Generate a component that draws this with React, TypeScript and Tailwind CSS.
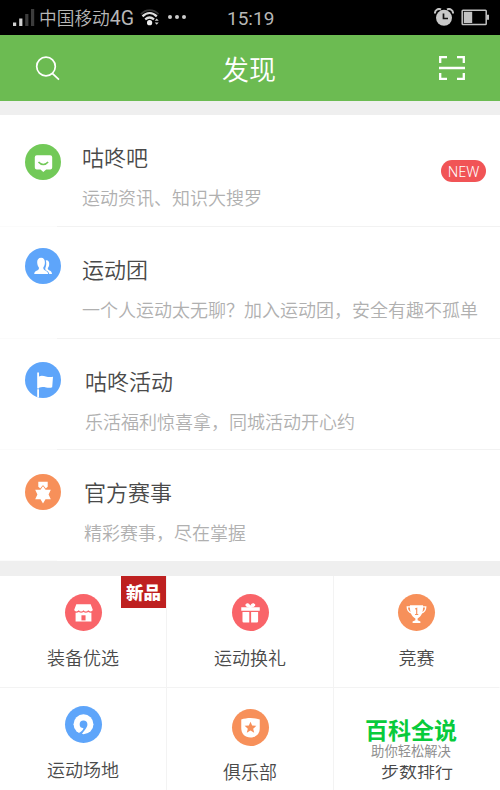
import { ReactNode } from "react";

type MenuRowType = {
  title: string;
  description: string;
  icon: ReactNode;
  rowClass: string;
  iconClass: string;
  textClass: string;
  isNew?: boolean;
};

type GridItemType = {
  name: string;
  icon: ReactNode;
  iconClass: string;
  labelClass: string;
  isNew?: boolean;
};

const menuRows: MenuRowType[] = [
  {
    title: "咕咚吧",
    description: "运动资讯、知识大搜罗",
    icon: <ChatIcon />,
    rowClass: "h-[112px]",
    iconClass: "mt-[29px] bg-[#72c958]",
    textClass: "pl-[25px] pt-[25px] border-[#f2f2f2]",
    isNew: true,
  },
  {
    title: "运动团",
    description: "一个人运动太无聊？加入运动团，安全有趣不孤单",
    icon: <GroupIcon />,
    rowClass: "h-[112px]",
    iconClass: "mt-[21px] bg-[#5ea5fa]",
    textClass: "pl-[25px] pt-[25px] border-[#f2f2f2]",
  },
  {
    title: "咕咚活动",
    description: "乐活福利惊喜拿，同城活动开心约",
    icon: <FlagIcon />,
    rowClass: "h-[111px]",
    iconClass: "mt-[23px] bg-[#5ea5fa]",
    textClass: "pl-[28px] pt-[25px] border-[#f2f2f2]",
  },
  {
    title: "官方赛事",
    description: "精彩赛事，尽在掌握",
    icon: <MedalIcon />,
    rowClass: "h-[111px]",
    iconClass: "mt-[24px] bg-[#f7905a]",
    textClass: "pl-[27px] pt-[25px] border-transparent",
  },
];

const gridItems: GridItemType[] = [
  {
    name: "装备优选",
    icon: <ShopIcon />,
    iconClass: "mt-[18px] bg-[#f96469]",
    labelClass: "mt-[14px]",
    isNew: true,
  },
  {
    name: "运动换礼",
    icon: <GiftIcon />,
    iconClass: "mt-[18px] bg-[#f96469]",
    labelClass: "mt-[14px]",
  },
  {
    name: "竞赛",
    icon: <TrophyIcon />,
    iconClass: "mt-[18px] bg-[#f7905a]",
    labelClass: "mt-[14px]",
  },
  {
    name: "运动场地",
    icon: <PlaceIcon />,
    iconClass: "mt-[18px] bg-[#5ea5fa]",
    labelClass: "mt-[14px]",
  },
  {
    name: "俱乐部",
    icon: <ClubIcon />,
    iconClass: "mt-[21px] bg-[#f7905a]",
    labelClass: "mt-[13px]",
  },
];

export default function App() {
  return (
    <div className="w-[500px] h-[790px] flex flex-col overflow-hidden bg-white font-['Noto_Sans_CJK_SC',sans-serif] font-[350]">
      <StatusBar />

      <header className="h-[66px] shrink-0 flex items-center justify-between bg-[#6cbb52] pl-[35px] pr-[34px] text-white">
        <svg className="w-[25px] h-[25px]" viewBox="0 0 25 25" fill="none" stroke="currentColor" strokeWidth="1.7">
          <circle cx="11" cy="10.5" r="9.3" />
          <path d="M17.3 17.3 24 23.7" />
        </svg>
        <h1 className="text-[27px] leading-[40px] font-[350] pt-px">发现</h1>
        <svg className="w-[28px] h-[26px]" viewBox="0 0 28 26" fill="none" stroke="currentColor" strokeWidth="2.3">
          <path d="M2.2 8V2.1H9M19 2.1h6.8V8M25.8 18v5.9H19M9 23.9H2.2V18M1 13h26" />
        </svg>
      </header>

      <div className="h-[14px] shrink-0 bg-[#efefef]" />

      <ul className="shrink-0">
        {menuRows.map((row) => (
          <MenuRow key={row.title} row={row} />
        ))}
      </ul>

      <div className="h-[15px] shrink-0 bg-[#efefef]" />

      <div className="grid grid-cols-[167px_167px_166px] grid-rows-[112px_112px] shrink-0">
        {gridItems.map((item) => (
          <GridItem key={item.name} item={item} />
        ))}

        <div className="flex flex-col items-center relative">
          <p className="mt-[73px] text-[18px] leading-[18px] text-[#484848]">步数排行</p>
          <div className="absolute left-[24px] top-[20px] w-[120px] h-[57px] bg-white flex flex-col items-center pr-[14px]">
            <strong className="text-[23px] leading-[24px] mt-[9px] font-bold text-[#08cb3b] whitespace-nowrap">百科全说</strong>
            <span className="mt-[3px] text-[13.3px] leading-[14px] font-normal text-[#8e8e8e] whitespace-nowrap">助你轻松解决</span>
          </div>
        </div>
      </div>
    </div>
  );
}

function StatusBar() {
  return (
    <div className="h-[35px] shrink-0 flex items-center bg-black text-[#b7b7b7] relative">
      <svg className="w-[22px] h-[18px] ml-[13px]" viewBox="0 0 22 18">
        <path d="M0 13.5h3.2V17H0zM6.2 9.5h3.2V17H6.2z" fill="#d0d0d0" />
        <path d="M12.2 5h3.2v12h-3.2zM18 0h3.2v17H18z" fill="#3c3c3c" />
      </svg>
      <span className="ml-[4px] text-[17.7px] leading-[24px] whitespace-nowrap">
        中国移动<span className="font-['Roboto',sans-serif] font-normal text-[19.5px]">4G</span>
      </span>
      <svg className="absolute left-[140px] top-[8px] w-[20px] h-[18px]" viewBox="0 0 20 18" fill="none">
        <path d="M1 6.2C5.8.8 13.5.8 18.5 6.2" stroke="#333" strokeWidth="1.8" />
        <path d="M2.5 8.4C6.8 4.1 12.4 4.1 16.8 8.4M5.2 11.4c2.8-2.4 6-2.4 8.8 0" stroke="#dedede" strokeWidth="2.2" />
        <circle cx="9.6" cy="14.7" r="2.6" fill="#eee" />
        <path d="m14.7 12.8 2-2.2 2 2.2zM14.7 14.5l2 2.2 2-2.2z" fill="#ccc" />
      </svg>
      <div className="absolute left-[168px] top-[15px] flex gap-[3px]">
        <i className="w-[4px] h-[4px] rounded-full bg-[#ccc]" />
        <i className="w-[4px] h-[4px] rounded-full bg-[#ccc]" />
        <i className="w-[4px] h-[4px] rounded-full bg-[#ccc]" />
      </div>
      <span className="absolute left-[227px] top-[7px] font-['Roboto',sans-serif] font-normal text-[19px] leading-[24px]">15:19</span>
      <svg className="absolute left-[434px] top-[8px] w-[20px] h-[19px]" viewBox="0 0 20 19">
        <path d="M1 5.5A4.1 4.1 0 0 1 7 1.5M13 1.5a4.1 4.1 0 0 1 6 4" fill="none" stroke="#c5c5c5" strokeWidth="2" />
        <circle cx="10" cy="9.8" r="8" fill="#c9c9c9" />
        <path d="M9.5 5.5v5h4.5" fill="none" stroke="#111" strokeWidth="1.7" />
      </svg>
      <svg className="absolute left-[461px] top-[9px] w-[29px] h-[17px]" viewBox="0 0 29 17">
        <rect x="1.2" y="1.2" width="24" height="14.4" rx=".8" fill="none" stroke="#c2c2c2" strokeWidth="1.5" />
        <path d="M2.8 2.8h8.4v11.2H2.8zM26 5.8h2v5h-2z" fill="#c2c2c2" />
      </svg>
    </div>
  );
}

function MenuRow({ row }: { row: MenuRowType }) {
  return (
    <li className={`flex relative ${row.rowClass}`}>
      <div className="w-[57px] shrink-0 flex justify-end items-start border-b border-[#fbfbfb]">
        <div className={`-mr-[4px] w-[36px] h-[36px] rounded-full shrink-0 ${row.iconClass}`}>{row.icon}</div>
      </div>
      <div className={`flex-1 border-b whitespace-nowrap ${row.textClass}`}>
        <h2 className="text-[22px] leading-[32px] text-[#4a4a4a]">{row.title}</h2>
        <p className="mt-[13px] text-[18px] leading-[24px] text-[#b0b0b0]">{row.description}</p>
      </div>
      {row.isNew && (
        <span className="absolute left-[441px] top-[45px] w-[45px] h-[22px] rounded-full bg-[#f15456] text-center text-white font-['Noto_Sans',sans-serif] font-light text-[14.5px] leading-[22px]">
          NEW
        </span>
      )}
    </li>
  );
}

function GridItem({ item }: { item: GridItemType }) {
  return (
    <div className="flex flex-col items-center relative border-r border-b border-[#f3f3f3] nth-[3]:border-r-transparent">
      <div className={`w-[37px] h-[37px] rounded-full shrink-0 ${item.iconClass}`}>{item.icon}</div>
      <p className={`text-[18px] leading-[24px] text-[#4a4a4a] ${item.labelClass}`}>{item.name}</p>
      {item.isNew && (
        <span className="absolute right-0 top-0 w-[45px] h-[32px] bg-[#be2020] text-center text-white font-black text-[17.5px] leading-[32px]">
          新品
        </span>
      )}
    </div>
  );
}

function ChatIcon() {
  return (
    <svg viewBox="0 0 36 36" fill="#fff">
      <path d="M11.8 11.2h13.4a2 2 0 0 1 2 2v10.4a2 2 0 0 1-2 2h-4L18.3 28l-2.8-2.4h-3.7a2 2 0 0 1-2-2V13.200a2 2 0 0 1 2-2z" />
      <path d="M13.500 18c2.600 3.200 7 3.200 9.600 0" fill="none" stroke="#72c958" strokeWidth="1.500" />
    </svg>
  );
}

function GroupIcon() {
  return (
    <svg viewBox="0 0 36 36" fill="#fff">
      <path d="M16.100 9.800c2.700 0 4 2 3.800 5-.1 2.300-.8 3.700-1.600 4.700-.2 1.800.6 2.200 2 2.900 1.700.8 2.700 1.700 2.900 3.600H9.200c.1-2.100 1.300-2.900 2.900-3.600 1.500-.7 2.100-1.200 1.800-2.900-1-1-1.500-2.400-1.700-4.700-.3-3 1.200-5 3.900-5z" />
      <path d="M20.800 12.300c2.500-.4 3.600 1.500 3.400 4-.1 1.700-.6 2.900-1.400 3.800-.1 1.500.6 1.900 1.700 2.400 1.600.8 2.300 1.600 2.500 3.500h-2.700c-.4-1.700-1.300-2.500-2.700-3.300-1.600-.9-1.500-2-1.100-3.200.9-1.500 1-4.400.3-7.200z" />
    </svg>
  );
}

function FlagIcon() {
  return (
    <svg viewBox="0 0 36 36" fill="#fff">
      <path d="M12.200 10.500h1.800V35.500l-1.800-.4z" />
      <path d="M14 14.400c4.500-2.200 8.500 2 14 .3l-.8 10.600c-4.200 1.800-8.300-1.600-13.200.5z" />
      <path d="M12 26.800h2.600" stroke="#5ea5fa" strokeWidth=".8" />
    </svg>
  );
}

function MedalIcon() {
  return (
    <svg viewBox="0 0 36 36" fill="#fff">
      <path d="M13.300 7.800h9.400v5l-2 1.700-2.700-3-2.700 3-2-1.700z" />
      <path d="m18 11.800 2.500 4h5.300l-2.200 4.700 2.200 4.700h-5.300L18 29.500l-2.500-4.300h-5.300l2.200-4.700-2.200-4.700h5.300z" />
      <path d="m15.500 14.600 2.500-3 2.500 3" fill="none" stroke="#f7905a" strokeWidth=".7" />
    </svg>
  );
}

function ShopIcon() {
  return (
    <svg viewBox="0 0 36 36" fill="#fff">
      <path d="M11 10h14l2 5.400c-.3 1.800-3 2.100-4.400.5-1.200 1.600-3.400 1.600-4.600 0-1.200 1.600-3.400 1.600-4.600 0-1.400 1.600-4.100 1.300-4.400-.5z" />
      <path d="M10.300 18.200c1.200.2 2.200-.1 3.100-.6 1.400 1 3.200 1 4.600 0 1.400 1 3.200 1 4.600 0 .9.500 1.900.8 3.100.6v8.500H10.300z" />
      <path d="M16 20.700h4v5h-4z" fill="#f96469" />
    </svg>
  );
}

function GiftIcon() {
  return (
    <svg viewBox="0 0 36 36" fill="#fff">
      <path d="M9 12.800h18v3.600H9zM10.200 17.600h6.600v10.100h-5.400a1.200 1.200 0 0 1-1.200-1.200zM18.600 17.600h6.800v8.900a1.200 1.200 0 0 1-1.200 1.200h-5.600z" />
      <path d="M17.800 13c-4.400-.7-5-2.700-3.300-3.300 1.500-.4 2.800 1.600 3.300 3.300.5-1.700 1.900-3.700 3.400-3.300 1.700.6 1 2.600-3.400 3.300" stroke="#fff" strokeWidth="1.200" />
    </svg>
  );
}

function TrophyIcon() {
  return (
    <svg viewBox="0 0 36 36" fill="#fff">
      <path d="M11.600 11h12.800c.2 7-1.500 10.800-5.300 12.800v1.800l2.700 1.200v1.500h-7.600v-1.500l2.700-1.200v-1.800C13.100 21.800 11.400 18 11.600 11z" />
      <path d="M12 12.500H9c0 3.300 1.600 5.500 4.400 6.200M24 12.500h3c0 3.300-1.600 5.500-4.400 6.200" fill="none" stroke="#fff" strokeWidth="1.300" />
      <path d="m16.700 14.700 1.500-.7v6M16.600 20h3.100" fill="none" stroke="#f7905a" strokeWidth="1.100" />
    </svg>
  );
}

function PlaceIcon() {
  return (
    <svg viewBox="0 0 36 36" fill="#fff">
      <circle cx="18" cy="17.800" r="9.700" />
      <path d="M18 14.100a3.700 3.700 0 0 1 3.800 3.800c0 3.200-3.200 5.600-5.800 10l-3-1.400c2.600-1.300 4.500-3.100 5-4.900a3.750 3.750 0 0 1 0-7.500z" fill="#5ea5fa" />
    </svg>
  );
}

function ClubIcon() {
  return (
    <svg viewBox="0 0 36 36" fill="#fff">
      <path d="M9 10.200c5.700-2 12.300-2 18 0v8.400c0 5.800-3.600 9.100-9 9.100s-9-3.300-9-9.100z" />
      <path d="m18 12.300 1.600 3.800 4.100.3-3.100 2.700 1 4-3.600-2.200-3.600 2.200 1-4-3.100-2.700 4.100-.3z" fill="#f7905a" />
    </svg>
  );
}
